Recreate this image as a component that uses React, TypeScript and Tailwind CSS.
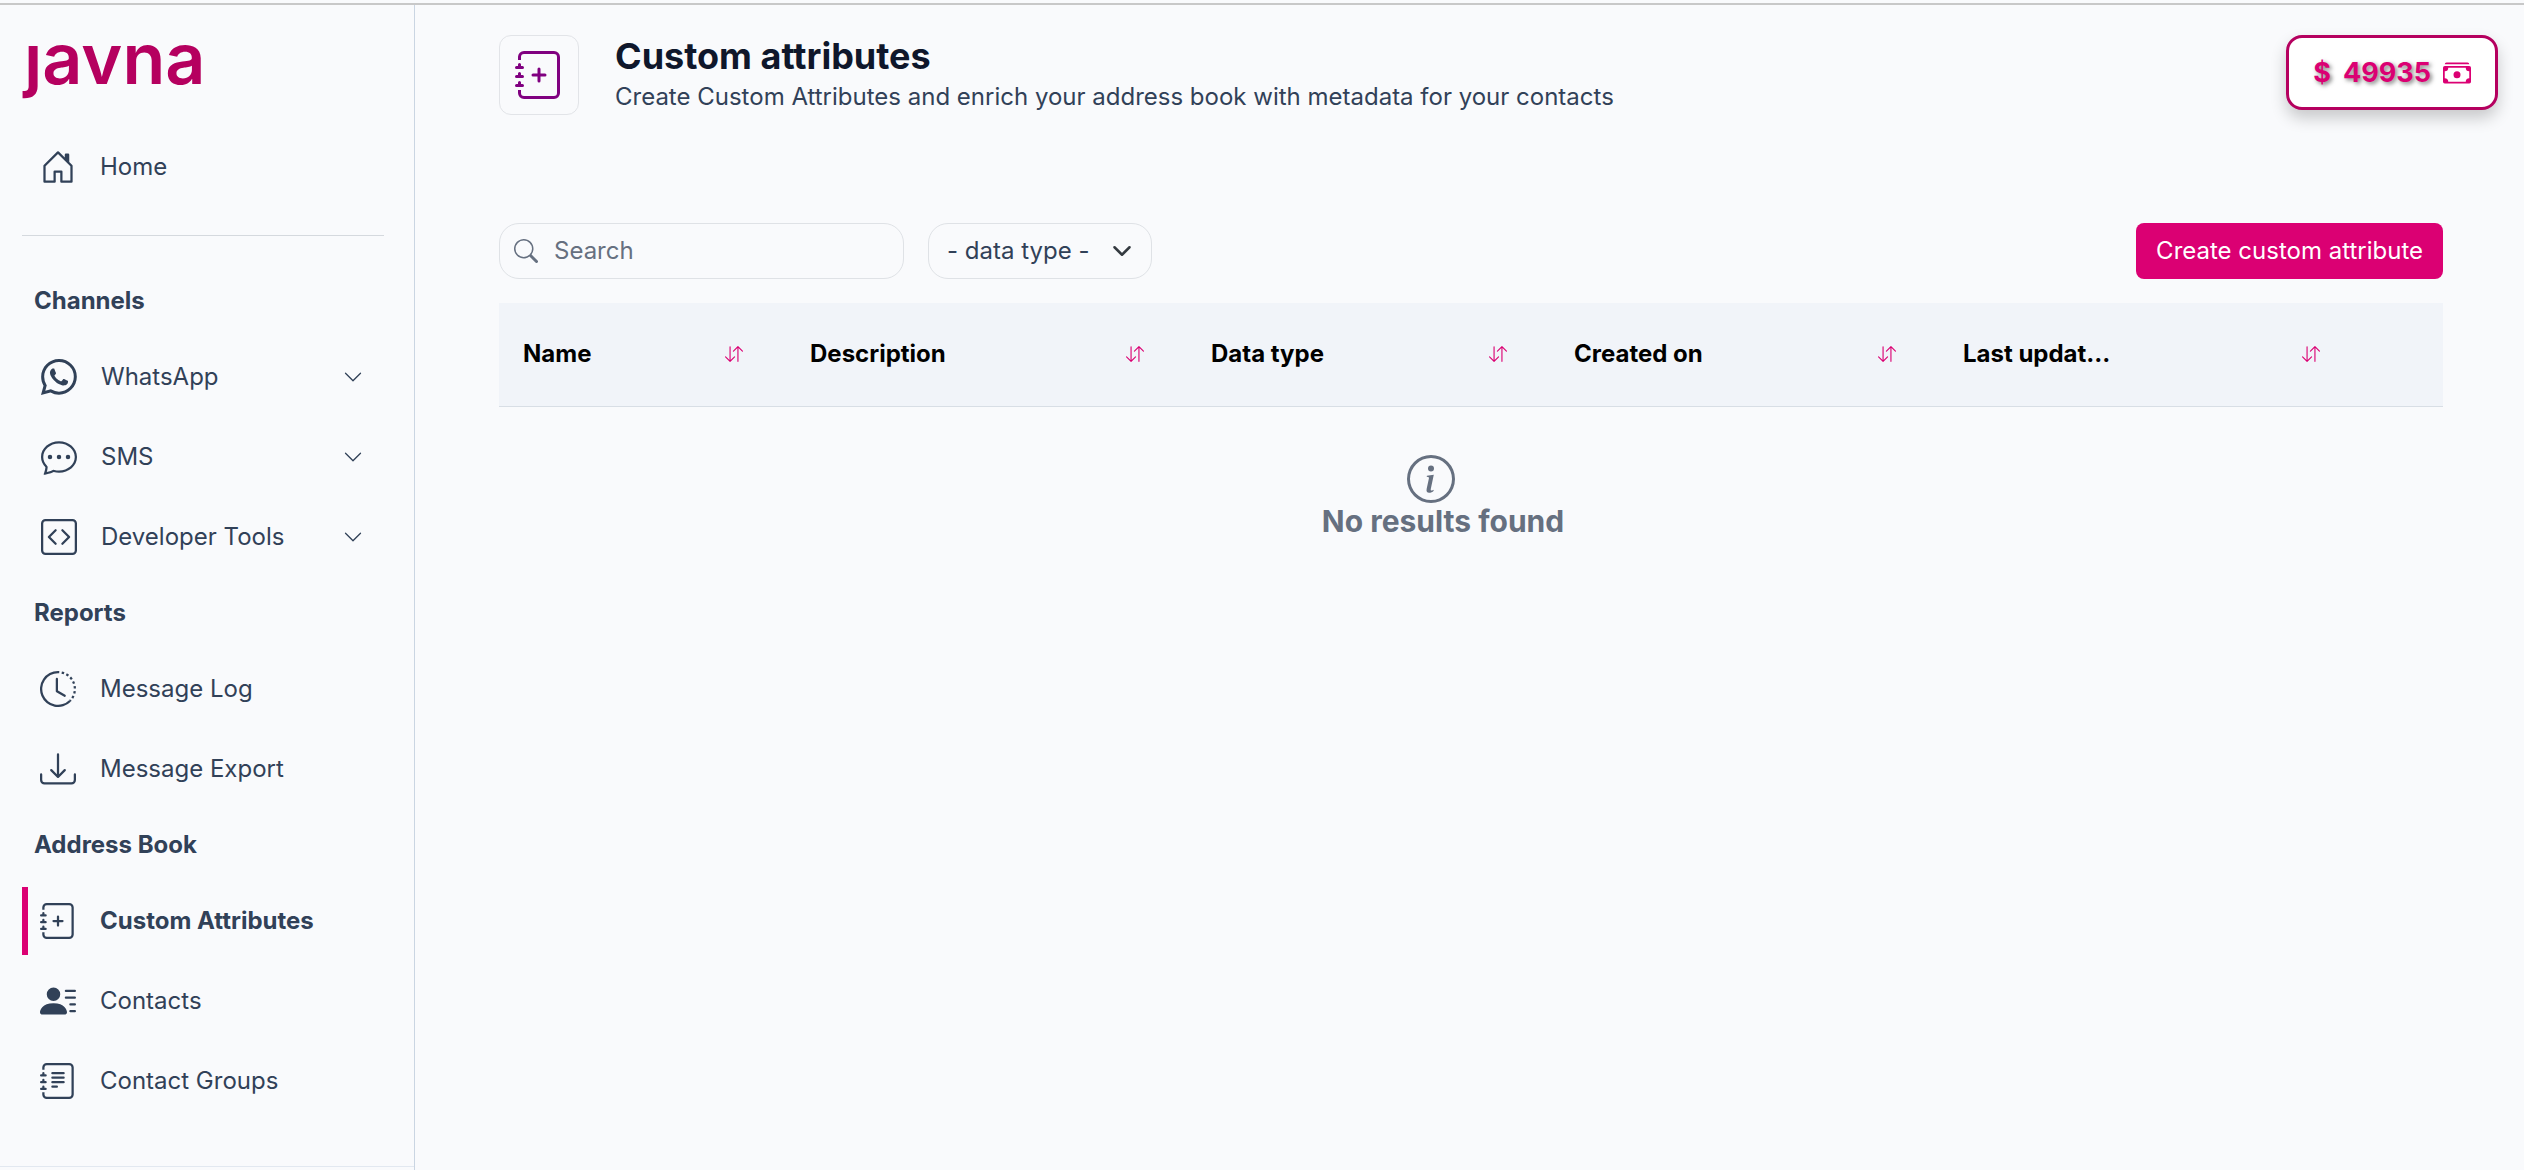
import { useState } from "react";
import type { ReactNode } from "react";
import type { IconType } from "react-icons";
import {
  BsArrowDownUp,
  BsCashStack,
  BsChatDots,
  BsChevronDown,
  BsClockHistory,
  BsCodeSquare,
  BsDownload,
  BsHouseDoor,
  BsInfoCircle,
  BsJournalPlus,
  BsJournalText,
  BsPersonLinesFill,
  BsSearch,
  BsWhatsapp,
} from "react-icons/bs";

const columns = [
  { label: "Name", width: "w-[287px]" },
  { label: "Description", width: "w-[401px]" },
  { label: "Data type", width: "w-[363px]" },
  { label: "Created on", width: "w-[389px]" },
  { label: "Last updat...", width: "w-[424px]" },
];

const Logo = () => (
  <a
    href="#"
    aria-label="javna"
    className="block h-28 pl-6 pt-3 text-[70px] leading-[84px] font-semibold text-[#b5005f]"
  >
    ȷavna
  </a>
);

type NavItemProps = { icon: IconType; label: string; active?: boolean };

const NavLink = ({ icon: Icon, label, active }: NavItemProps) => (
  <li className="flex h-20 items-center">
    <a
      href="#"
      aria-current={active ? "page" : undefined}
      className={
        active
          ? "flex h-[68px] flex-1 items-center gap-6 border-l-[6px] border-[#db0073] pl-3 font-bold"
          : "flex h-[68px] flex-1 items-center gap-6 pl-[18px]"
      }
    >
      <Icon className="size-9 shrink-0" />
      {label}
    </a>
  </li>
);

const NavMenu = ({ icon: Icon, label }: NavItemProps) => (
  <li className="flex h-20 items-center">
    <button
      type="button"
      className="flex h-[68px] flex-1 items-center gap-6 pl-[19px] pr-[21px] text-left"
    >
      <Icon className="size-9 shrink-0" />
      <span className="flex-1">{label}</span>
      <BsChevronDown className="size-5" />
    </button>
  </li>
);

const NavSection = ({ title, children }: { title: string; children: ReactNode }) => (
  <section>
    <h2 className="flex h-[72px] items-center pl-3 font-bold">{title}</h2>
    <ul>{children}</ul>
  </section>
);

const Sidebar = () => (
  <aside className="flex w-[415px] shrink-0 flex-col border-r border-slate-300 text-slate-700">
    <Logo />
    <nav className="flex-1 pl-[22px] pr-[30px]">
      <ul className="mb-[29px] border-b border-[#d5d9de] pb-7 pt-[10px]">
        <NavLink icon={BsHouseDoor} label="Home" />
      </ul>
      <NavSection title="Channels">
        <NavMenu icon={BsWhatsapp} label="WhatsApp" />
        <NavMenu icon={BsChatDots} label="SMS" />
        <NavMenu icon={BsCodeSquare} label="Developer Tools" />
      </NavSection>
      <NavSection title="Reports">
        <NavLink icon={BsClockHistory} label="Message Log" />
        <NavLink icon={BsDownload} label="Message Export" />
      </NavSection>
      <NavSection title="Address Book">
        <NavLink icon={BsJournalPlus} label="Custom Attributes" active />
        <NavLink icon={BsPersonLinesFill} label="Contacts" />
        <NavLink icon={BsJournalText} label="Contact Groups" />
      </NavSection>
    </nav>
    <div className="h-1 border-t border-slate-200" />
  </aside>
);

const Header = () => (
  <header className="flex items-start pl-[84px] pr-[26px] pt-[30px]">
    <div className="flex size-20 items-center justify-center rounded-xl border border-[#e2e4e8] text-[#800080]">
      <BsJournalPlus className="size-12" />
    </div>
    <div className="ml-9 flex-1">
      <h1 className="text-4xl leading-[42px] font-bold text-slate-900">Custom attributes</h1>
      <p className="leading-10">
        Create Custom Attributes and enrich your address book with metadata for your contacts
      </p>
    </div>
    <div className="flex h-[75px] items-center rounded-2xl border-[3px] border-[#b5005f] bg-white px-6 text-[27px] font-bold text-[#db0073] shadow-[0_8px_16px_rgba(0,0,0,0.2)]">
      <span className="mr-3 text-shadow-[2px_2px_4px_rgba(0,0,0,0.5)]">$</span>
      <span className="mr-3 text-shadow-[2px_2px_4px_rgba(0,0,0,0.5)]">49935</span>
      <BsCashStack className="size-7" />
    </div>
  </header>
);

const Toolbar = () => {
  const [search, setSearch] = useState("");

  return (
    <div className="flex items-center gap-6">
      <label className="flex h-14 w-[405px] items-center gap-4 rounded-[20px] border border-[#dfe2e6] px-[14px] text-[#667080]">
        <BsSearch className="size-6 shrink-0" />
        <input
          type="text"
          aria-label="Search"
          placeholder="Search"
          value={search}
          onChange={(e) => setSearch(e.target.value)}
          className="w-full bg-transparent outline-none placeholder:text-[#667080]"
        />
      </label>
      <div className="relative">
        <select
          aria-label="Data type"
          className="h-14 w-56 appearance-none rounded-[20px] border border-[#dfe2e6] bg-transparent pl-[18px] pr-12"
        >
          <option>- data type -</option>
          <option>Text</option>
          <option>Number</option>
          <option>Date</option>
        </select>
        <svg
          viewBox="0 0 16 16"
          className="pointer-events-none absolute right-5 top-[18px] size-5 fill-none stroke-[#343a40] stroke-2"
          strokeLinecap="round"
          strokeLinejoin="round"
        >
          <path d="m2 5 6 6 6-6" />
        </svg>
      </div>
      <button
        type="button"
        className="ml-auto h-14 rounded-lg bg-[#db0073] px-5 text-white"
      >
        Create custom attribute
      </button>
    </div>
  );
};

const AttributesTable = () => (
  <table className="mt-6 w-full table-fixed">
    <thead>
      <tr className="h-[103px] border-b border-[#d8dee5] bg-[#f1f4f9] text-left text-black">
        {columns.map(({ label, width }) => (
          <th key={label} className={`pl-6 pr-[43px] font-bold ${width}`}>
            <div className="flex items-center justify-between">
              {label}
              <button type="button" aria-label={`Sort by ${label}`} className="text-[#db0073]">
                <BsArrowDownUp className="size-[18px]" />
              </button>
            </div>
          </th>
        ))}
        <td className="w-20" />
      </tr>
    </thead>
    <tbody>
      <tr>
        <td colSpan={6} className="pr-14 pt-12">
          <div className="flex flex-col items-center text-[#667080]">
            <BsInfoCircle className="mr-6 size-12" />
            <p className="text-3xl font-bold">No results found</p>
          </div>
        </td>
      </tr>
    </tbody>
  </table>
);

const App = () => {
  return (
    <div className="flex min-h-screen flex-col bg-[#f9fafc] pt-[3px] font-['Inter',sans-serif] text-2xl text-slate-700">
      <div className="h-[2px] bg-[#c8c8c8]" />
      <div className="flex flex-1">
        <Sidebar />
        <main className="min-w-0 flex-1">
          <Header />
          <div className="pl-[84px] pr-[81px] pt-[106px]">
            <Toolbar />
            <AttributesTable />
          </div>
        </main>
      </div>
    </div>
  );
};

export default App;
